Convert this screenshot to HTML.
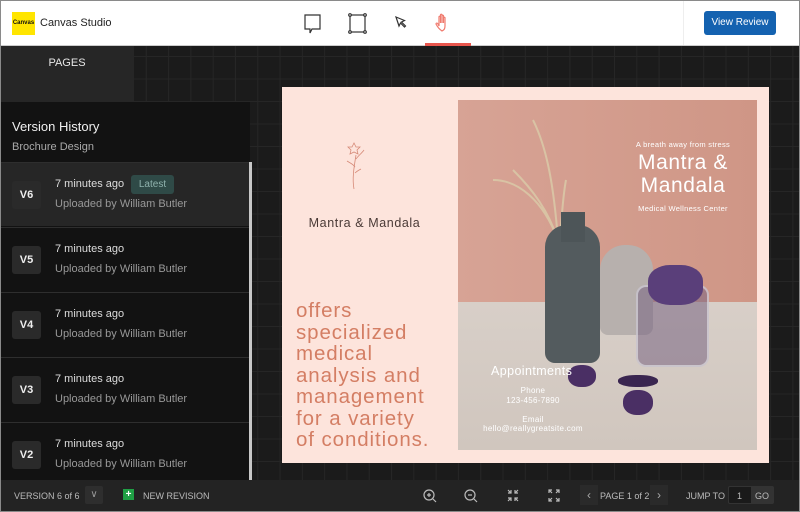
<!DOCTYPE html>
<html><head><meta charset="utf-8"><style>
*{margin:0;padding:0;box-sizing:border-box}
body{width:800px;height:512px;overflow:hidden;font-family:"Liberation Sans",sans-serif;background:#1b1b1b;position:relative}
.frame{position:absolute;inset:0;border:1px solid #8a8a8a;pointer-events:none;z-index:50}
.top{position:absolute;left:0;top:0;width:800px;height:46px;background:#fff;border-bottom:1px solid #ccc}
.grid{position:absolute;left:0;top:46px;width:800px;height:434px;background-color:#1b1b1b;background-image:linear-gradient(#262626 1px,transparent 1px),linear-gradient(90deg,#262626 1px,transparent 1px);background-size:22.3px 22.5px;background-position:12px 10px}
.pages{position:absolute;left:0;top:46px;width:134px;height:56px;background:#262626;color:#e8e8e8;font-size:11px;text-align:center;padding-top:11px}
.panel{position:absolute;left:0;top:102px;width:250px;height:378px;background:#121212;overflow:hidden}
.scroll{position:absolute;left:249px;top:162px;width:3px;height:318px;background:#c8c8c8}
.item{position:absolute;left:0;width:249px;height:64px;border-top:1px solid #2e2e2e}
.vb{position:absolute;left:12px;top:18px;width:29px;height:28px;background:#2a2a2a;border-radius:3px;color:#eee;font-size:11px;font-weight:bold;text-align:center;line-height:28px}
.t1{position:absolute;left:55px;top:15px;color:#ddd;font-size:11px}
.t2{position:absolute;left:55px;top:35px;color:#999;font-size:11px}
.foot{position:absolute;left:0;top:480px;width:800px;height:32px;background:#232323;color:#bbb;font-size:9px}
.foot span{position:absolute;top:11px}
</style></head><body>
<div class="top">
 <div style="position:absolute;left:12px;top:12px;width:23px;height:23px;background:#ffe500;font-size:6px;font-weight:bold;line-height:23px;text-align:center;color:#111">Canvas</div>
 <div style="position:absolute;left:40px;top:16px;font-size:11px;line-height:14px;color:#222">Canvas Studio</div>
 <svg style="position:absolute;left:300px;top:12px" width="200" height="24" viewBox="0 0 200 24" fill="none" stroke="#333" stroke-width="1.2">
  <path d="M5 3h15v14h-8l-2 4v-4H5z"/>
  <rect x="50" y="3" width="15" height="17"/><circle cx="50" cy="3" r="1.3" fill="#fff"/><circle cx="65" cy="3" r="1.3" fill="#fff"/><circle cx="50" cy="20" r="1.3" fill="#fff"/><circle cx="65" cy="20" r="1.3" fill="#fff"/>
  <path d="M96 5l3 9 1.5-3 4 4 1-1-4-4 3-1.5z"/>
  <path stroke="#f07b6f" d="M142 19c-3-2-5-5-6-7 0-1 1-1.5 2 0l1 2V5c0-1 1.5-1 1.5 0v6V3c0-1 1.5-1 1.5 0v8V4c0-1 1.5-1 1.5 0v7V6c0-1 1.5-1 1.5 0v8c0 3-1 4-3 5z"/>
 </svg>
 <div style="position:absolute;left:425px;top:43px;width:46px;height:3px;background:#e8564d"></div>
 <div style="position:absolute;left:683px;top:0;width:1px;height:45px;background:#eee"></div>
 <div style="position:absolute;left:704px;top:11px;width:72px;height:24px;background:#1462b0;border-radius:3px;color:#fff;font-size:10px;text-align:center;line-height:24px">View Review</div>
</div>
<div class="grid"></div>
<div class="pages">PAGES</div>
<div class="panel">
 <div style="position:absolute;left:12px;top:17px;color:#f0f0f0;font-size:13px">Version History</div>
 <div style="position:absolute;left:12px;top:39px;color:#aaa;font-size:11px">Brochure Design</div>
</div>
<div class="item" style="top:162px;background:#262626"><div class="vb">V6</div><div class="t1">7 minutes ago</div><div style="position:absolute;left:131px;top:12px;width:43px;height:19px;background:#2f4a47;border-radius:3px;color:#8fb2ad;font-size:10px;text-align:center;line-height:19px">Latest</div><div class="t2">Uploaded by William Butler</div></div>
<div class="item" style="top:227px;background:#121212"><div class="vb">V5</div><div class="t1">7 minutes ago</div><div class="t2">Uploaded by William Butler</div></div>
<div class="item" style="top:292px;background:#121212"><div class="vb">V4</div><div class="t1">7 minutes ago</div><div class="t2">Uploaded by William Butler</div></div>
<div class="item" style="top:357px;background:#121212"><div class="vb">V3</div><div class="t1">7 minutes ago</div><div class="t2">Uploaded by William Butler</div></div>
<div class="item" style="top:422px;height:58px;background:#121212"><div class="vb">V2</div><div class="t1">7 minutes ago</div><div class="t2">Uploaded by William Butler</div></div>
<div class="scroll"></div>

<div style="position:absolute;left:282px;top:87px;width:487px;height:376px;background:#fde4dc">
 <svg style="position:absolute;left:62px;top:48px" width="24" height="56" viewBox="0 0 24 56" fill="none" stroke="#d68a78" stroke-width="0.8"><path d="M10 54C8 44 10 32 12 20M12 24c2-3 6-6 8-9M11 32c-2-3-5-4-8-6M11 38c2-2 4-3 6-4M8 12l2-4 2 4 4 0-3 3 1 4-4-2-4 2 1-4-3-3z"/></svg>
 <div style="position:absolute;left:0;width:165px;top:129px;text-align:center;font-size:12.5px;letter-spacing:0.6px;color:#4a3a36">Mantra &amp; Mandala</div>
 <div style="position:absolute;left:14px;top:213px;font-size:20.5px;line-height:21.5px;letter-spacing:0.9px;color:#d47e64">offers<br>specialized<br>medical<br>analysis and<br>management<br>for a variety<br>of conditions.</div>
 <div style="position:absolute;left:176px;top:13px;width:299px;height:350px;overflow:hidden;background:linear-gradient(90deg,#d7a395,#cf9686)">
  <div style="position:absolute;left:0;top:202px;width:299px;height:148px;background:linear-gradient(#d8cfc8,#d0c6be)"></div>
  <svg style="position:absolute;left:30px;top:10px" width="100" height="140" viewBox="0 0 100 140" fill="none" stroke="#d9c3a4" stroke-width="2"><path d="M70 130C66 80 60 40 45 10M70 130C55 90 30 70 5 70M70 130C60 100 45 80 25 60M72 130C74 100 76 80 78 70"/></svg>
  <div style="position:absolute;left:87px;top:125px;width:55px;height:138px;background:#535b5e;border-radius:22px 22px 10px 10px"></div>
  <div style="position:absolute;left:103px;top:112px;width:24px;height:30px;background:#4d5558"></div>
  <div style="position:absolute;left:142px;top:145px;width:53px;height:90px;background:#b7b0ad;border-radius:25px 25px 8px 8px"></div>
  <div style="position:absolute;left:178px;top:185px;width:73px;height:82px;background:rgba(120,100,130,.55);border-radius:10px;border:2px solid rgba(230,230,235,.6)"></div>
  <div style="position:absolute;left:190px;top:165px;width:55px;height:40px;background:#5a3f7a;border-radius:40%"></div>
  <div style="position:absolute;left:110px;top:265px;width:28px;height:22px;background:#4a2f64;border-radius:45%"></div>
  <div style="position:absolute;left:165px;top:290px;width:30px;height:25px;background:#4a2f64;border-radius:45%"></div>
  <div style="position:absolute;left:160px;top:275px;width:40px;height:12px;background:#3a2650;border-radius:45%"></div>
  <div style="position:absolute;left:155px;top:40px;width:140px;text-align:center;color:#fff;font-size:7.5px;letter-spacing:0.3px">A breath away from stress</div>
  <div style="position:absolute;left:155px;top:51px;width:140px;text-align:center;color:#fff;font-size:21px;line-height:23px;letter-spacing:0.6px">Mantra &amp;<br>Mandala</div>
  <div style="position:absolute;left:155px;top:104px;width:140px;text-align:center;color:#fff;font-size:7.5px;letter-spacing:0.3px">Medical Wellness Center</div>
  <div style="position:absolute;left:33px;top:264px;color:#fff;font-size:12.5px;letter-spacing:0.4px">Appointments</div>
  <div style="position:absolute;left:15px;top:286px;width:120px;text-align:center;color:#fff;font-size:8px;line-height:9.5px;letter-spacing:0.3px">Phone<br>123-456-7890<br><br>Email<br>hello@reallygreatsite.com</div>
 </div>
</div>

<div class="foot">
 <span style="left:14px">VERSION 6 of 6</span>
 <div style="position:absolute;left:85px;top:6px;width:18px;height:18px;background:#2e2e2e;border-radius:2px;color:#999;font-size:10px;text-align:center;line-height:18px">∨</div>
 <div style="position:absolute;left:123px;top:9px;width:11px;height:11px;background:#1fa045;color:#fff;font-size:10px;font-weight:bold;text-align:center;line-height:11px">+</div>
 <span style="left:143px">NEW REVISION</span>
 <svg style="position:absolute;left:420px;top:7px" width="150" height="18" viewBox="0 0 150 18" fill="none" stroke="#bbb" stroke-width="1.2">
  <circle cx="9" cy="8" r="5"/><path d="M13 12l3 3M7 8h4M9 6v4"/>
  <circle cx="50" cy="8" r="5"/><path d="M54 12l3 3M48 8h4"/>
  <path d="M88 3l3 3M91 3v3h-3M98 3l-3 3M95 3v3h3M88 14l3-3M88 11h3v3M98 14l-3-3M95 14v-3h3"/>
  <path d="M129 6V3h3M129 3l3 3M139 6V3h-3M139 3l-3 3M129 11v3h3M129 14l3-3M139 11v3h-3M139 14l-3-3"/>
 </svg>
 <div style="position:absolute;left:580px;top:5px;width:18px;height:20px;background:#2a2a2a;color:#aaa;font-size:12px;text-align:center;line-height:20px">‹</div>
 <span style="left:600px">PAGE 1 of 2</span>
 <div style="position:absolute;left:650px;top:5px;width:18px;height:20px;background:#2a2a2a;color:#aaa;font-size:12px;text-align:center;line-height:20px">›</div>
 <span style="left:686px">JUMP TO</span>
 <div style="position:absolute;left:728px;top:6px;width:46px;height:18px;background:#1a1a1a;border:1px solid #333;border-radius:2px"></div>
 <span style="left:737px">1</span>
 <div style="position:absolute;left:751px;top:7px;width:22px;height:16px;background:#333"></div>
 <span style="left:755px">GO</span>
</div>
<div class="frame"></div>
</body></html>
